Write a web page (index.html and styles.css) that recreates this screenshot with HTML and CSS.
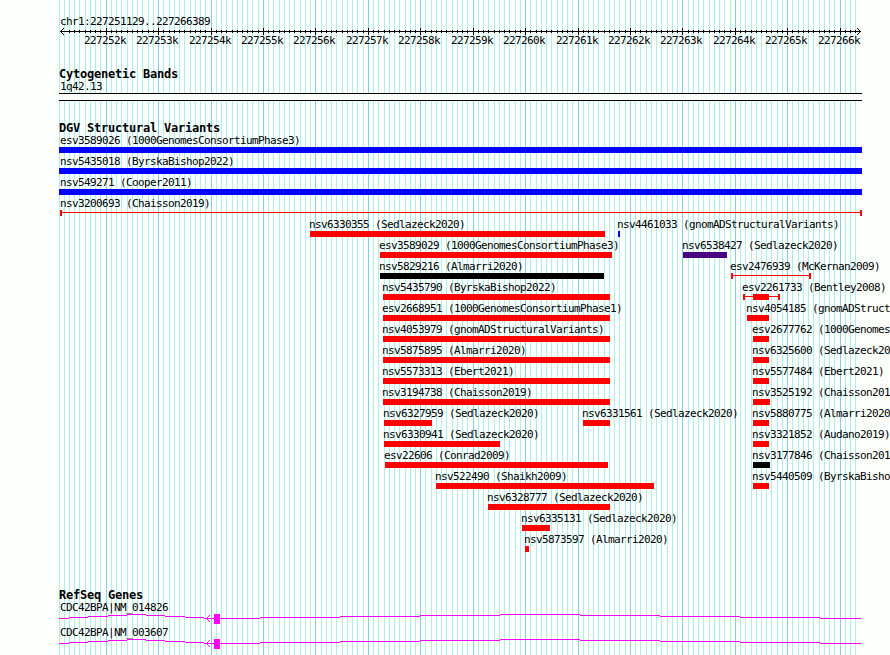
FILE: index.html
```html
<!DOCTYPE html>
<html lang="en">
<head>
    <meta charset="UTF-8">
    <title>DGV Genome Browser</title>
    <link rel="stylesheet" href="styles.css">
</head>
<body>
    <div class="browser">
        <svg class="grid" id="grid" width="890" height="655"></svg>

        <div class="ruler">
            <div class="region">chr1:227251129..227266389</div>
            <svg class="axis" id="axis" width="890" height="7"></svg>
            <div class="ticks" id="ticks"></div>
        </div>

        <div class="track cyto">
            <h2>Cytogenetic Bands</h2>
            <div class="band-name">1q42.13</div>
            <div class="band"></div>
        </div>

        <div class="track variants">
            <h2>DGV Structural Variants</h2>
            <div id="variants"></div>
        </div>

        <div class="track genes">
            <h2>RefSeq Genes</h2>
            <div id="genes"></div>
        </div>
    </div>
    <script src="script.js"></script>
</body>
</html>
```

FILE: styles.css
```css
body {
    margin: 0;
    background: #fdfffc;
    color: #000;
    font-family: "DejaVu Sans Mono", monospace;
    font-size: 11px;
    line-height: 13px;
    letter-spacing: -0.622px;
    overflow: hidden;
}
.browser {
    position: relative;
    width: 890px;
    height: 655px;
    overflow: hidden;
    white-space: nowrap;
}
svg {
    display: block;
    shape-rendering: crispEdges;
}
/* grid lines lie behind all tracks */
.grid {
    position: absolute;
    top: 0;
    left: 0;
    z-index: -1;
}
.minor {
    fill: #afeeee;
}
.major {
    fill: #87ceeb;
}
h2 {
    margin: 0 0 0 59px;
    font-size: 12px;
    line-height: 13px;
    letter-spacing: -0.224px;
}

/* ruler */
.ruler {
    padding-top: 15px;
}
.region,
.band-name {
    margin-left: 60px;
}
.ticks {
    display: grid;
    margin-top: -1px;
}
.ticks span {
    grid-area: 1 / 1;
}

/* cytogenetic bands */
.cyto {
    padding-top: 21px;
}
.cyto h2 {
    height: 12px;
}
.band {
    width: 803px;
    height: 6px;
    margin-left: 59px;
    border-top: 1px solid #000;
    border-bottom: 1px solid #000;
    background: #fdfffc;
}

/* variants */
.variants {
    padding-top: 21px;
}
.variants h2 {
    height: 12px;
}
.row {
    display: grid;
    height: 21px;
}
.feature {
    grid-area: 1 / 1;
    width: 0;
}
.label {
    height: 13px;
    margin-left: -1px;
}
.full .label {
    margin-left: 1px;
}
.bar {
    height: 6px;
}
.red {
    background: #f00;
}
.blue {
    background: #00f;
}
.black {
    background: #000;
}
.indigo {
    background: #4b0082;
}
.range {
    display: flex;
    height: 6px;
    box-sizing: border-box;
    border: solid #f00;
    border-width: 0 2px;
    background: linear-gradient(#f00, #f00) 0 2px / 100% 1px no-repeat;
}

/* genes */
.genes {
    padding-top: 35px;
}
.genes h2 {
    height: 12px;
}
.gene {
    height: 25px;
}
.gene-name {
    height: 12px;
    margin-left: 60px;
}
.gene svg {
    fill: #f0f;
}
```

FILE: script.js
```javascript
const majorStep = 52.4243;
const firstMajor = 106.19;

// Features by row: [name, start, end, color, thick start, thick end]
const rows = [
    [['esv3589026 (1000GenomesConsortiumPhase3)', 59, 862, 'blue']],
    [['nsv5435018 (ByrskaBishop2022)', 59, 862, 'blue']],
    [['nsv549271 (Cooper2011)', 59, 862, 'blue']],
    [['nsv3200693 (Chaisson2019)', 60, 862, 'range']],
    [['nsv6330355 (Sedlazeck2020)', 310, 605, 'red'], ['nsv4461033 (gnomADStructuralVariants)', 618, 620, 'blue']],
    [['esv3589029 (1000GenomesConsortiumPhase3)', 380, 612, 'red'], ['nsv6538427 (Sedlazeck2020)', 683, 727, 'indigo']],
    [['nsv5829216 (Almarri2020)', 380, 604, 'black'], ['esv2476939 (McKernan2009)', 731, 811, 'range']],
    [['nsv5435790 (ByrskaBishop2022)', 383, 610, 'red'], ['esv2261733 (Bentley2008)', 743, 780, 'range', 753, 769]],
    [['esv2668951 (1000GenomesConsortiumPhase1)', 383, 610, 'red'], ['nsv4054185 (gnomADStructuralVariants)', 747, 769, 'red']],
    [['nsv4053979 (gnomADStructuralVariants)', 383, 610, 'red'], ['esv2677762 (1000GenomesConsortiumPhase1)', 753, 769, 'red']],
    [['nsv5875895 (Almarri2020)', 383, 610, 'red'], ['nsv6325600 (Sedlazeck2020)', 753, 769, 'red']],
    [['nsv5573313 (Ebert2021)', 383, 610, 'red'], ['nsv5577484 (Ebert2021)', 753, 769, 'red']],
    [['nsv3194738 (Chaisson2019)', 383, 610, 'red'], ['nsv3525192 (Chaisson2019)', 753, 770, 'red']],
    [['nsv6327959 (Sedlazeck2020)', 384, 432, 'red'], ['nsv6331561 (Sedlazeck2020)', 583, 610, 'red'], ['nsv5880775 (Almarri2020)', 753, 769, 'red']],
    [['nsv6330941 (Sedlazeck2020)', 384, 500, 'red'], ['nsv3321852 (Audano2019)', 753, 769, 'red']],
    [['esv22606 (Conrad2009)', 385, 608, 'red'], ['nsv3177846 (Chaisson2019)', 753, 770, 'black']],
    [['nsv522490 (Shaikh2009)', 436, 654, 'red'], ['nsv5440509 (ByrskaBishop2022)', 753, 769, 'red']],
    [['nsv6328777 (Sedlazeck2020)', 488, 610, 'red']],
    [['nsv6335131 (Sedlazeck2020)', 522, 550, 'red']],
    [['nsv5873597 (Almarri2020)', 525, 529, 'red']]
];

const genes = ['CDC42BPA|NM_014826', 'CDC42BPA|NM_003607'];

// Intron line pieces: [start, end, y]
const introns = [
    [59, 69, 5], [69, 88, 4], [88, 108, 3], [108, 127, 2], [127, 146, 1],
    [146, 165, 2], [165, 185, 3], [185, 204, 4], [204, 260, 5],
    [260, 340, 4], [340, 420, 3], [420, 500, 2], [500, 580, 1],
    [580, 660, 2], [660, 740, 3], [740, 820, 4], [820, 861, 5]
];

function rect(x, y, w, h, cls) {
    return `<rect x="${x}" y="${y}" width="${w}" height="${h}" class="${cls || ''}"/>`;
}

function drawRuler() {
    let grid = '';
    let axis = rect(60, 3, 801, 1);
    let labels = '';
    for (let i = -9; i <= 143; i++) {
        const x = Math.floor(firstMajor + i * majorStep / 10);
        const major = i % 10 === 0;
        grid += rect(x, 0, 1, 655, major ? 'major' : 'minor');
        // no ticks under the left arrow head
        if (x > 65) {
            axis += major ? rect(x, 0, 1, 7) : rect(x, 2, 1, 3);
        }
        if (major) {
            labels += `<span style="margin-left: ${x - 22}px">${227252 + i / 10}k</span>`;
        }
    }
    // arrow heads
    for (let i = 1; i <= 3; i++) {
        axis += rect(60 + i, 3 - i, 1, 1) + rect(60 + i, 3 + i, 1, 1);
        axis += rect(860 - i, 3 - i, 1, 1) + rect(860 - i, 3 + i, 1, 1);
    }
    document.getElementById('grid').innerHTML = grid;
    document.getElementById('axis').innerHTML = axis;
    document.getElementById('ticks').innerHTML = labels;
}

function drawFeature([name, start, end, color, thickStart, thickEnd]) {
    let thick = '';
    if (thickStart) {
        thick = `<div class="bar red" style="margin-left: ${thickStart - start - 2}px; width: ${thickEnd - thickStart}px"></div>`;
    }
    const cls = color === 'range' ? 'range' : 'bar ' + color;
    const full = start === 59 ? ' full' : '';
    const shift = name.startsWith('nsv3200693') ? ' style="margin-left: 0"' : '';
    return `<div class="feature${full}" style="margin-left: ${start}px">` +
        `<div class="label"${shift}>${name}</div>` +
        `<div class="${cls}" style="width: ${end - start}px">${thick}</div></div>`;
}

function drawGene(name) {
    let shapes = introns.map(([a, b, y]) => rect(a, y, b - a, 1)).join('');
    shapes += rect(214, 1, 6, 10);
    for (let i = 1; i <= 3; i++) {
        shapes += rect(206 + i, 5 - i, 1, 1) + rect(206 + i, 5 + i, 1, 1);
    }
    return `<div class="gene"><div class="gene-name">${name}</div><svg width="890" height="13">${shapes}</svg></div>`;
}

drawRuler();
document.getElementById('variants').innerHTML = rows.map(row => `<div class="row">${row.map(drawFeature).join('')}</div>`).join('');
document.getElementById('genes').innerHTML = genes.map(drawGene).join('');
```
